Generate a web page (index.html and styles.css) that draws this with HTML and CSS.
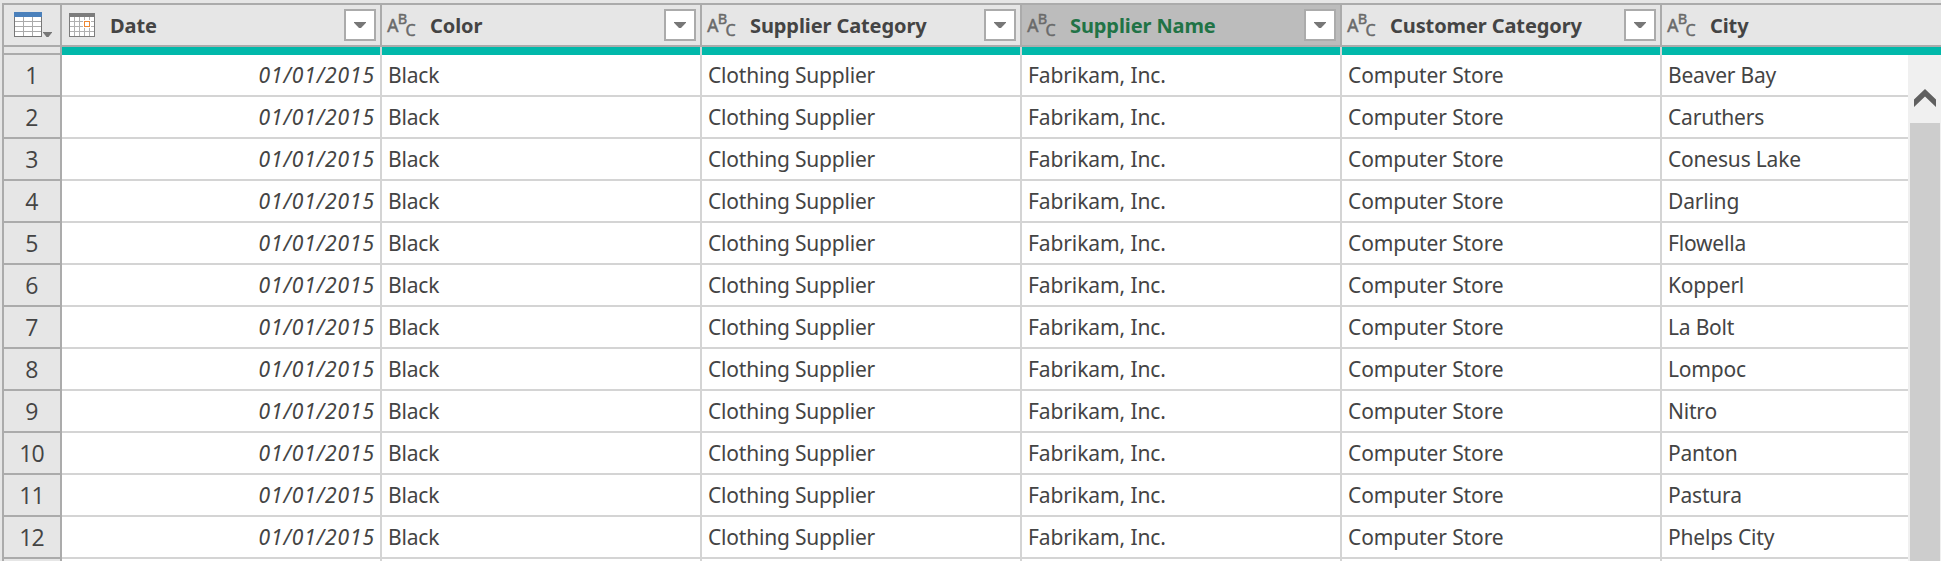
FILE: index.html
```html
<!DOCTYPE html>
<html lang="en">
<head>
<meta charset="utf-8">
<title>Query preview</title>
<link rel="stylesheet" href="styles.css">
</head>
<body>
<div class="grid">
  <div class="header">
    <div class="corner">
      <svg class="table-icon" width="28" height="25" shape-rendering="crispEdges">
        <path d="M0 5H28V25H0Z" fill="#777"/><path d="M1 5H27V24H1Z" fill="#fff"/>
        <path d="M0 0H28V5H0Z" fill="#4a80bb"/>
        <path d="M1 9.500H27M1 14.500H27M1 19.500H27M9.500 5V24M18.500 5V24" stroke="#aaa"/>
      </svg>
      <svg class="corner-arrow" width="9" height="5"><path d="M0 0H9V.5L5.500 5H3.500L0 .5Z" fill="#777"/></svg>
    </div>
    <div class="head">
      <svg class="calendar-icon" width="26" height="24" shape-rendering="crispEdges">
        <path d="M0 0H26V24H0Z" fill="#7c7c7c"/><path d="M1 4H25V23H1Z" fill="#fff"/>
        <path d="M5.500 4V23M10.500 4V23M15.500 4V23M20.500 4V23M1 8.500H25M1 13.500H25M1 18.500H25" stroke="#b0b0b0"/>
        <path d="M14 7H22V15H14Z" fill="#fff"/><path d="M15.500 8.500H20.500V13.500H15.500Z" fill="#fff" stroke="#ed8733"/>
      </svg>
      <span class="title">Date</span><span class="filter"><svg width="12" height="6"><path d="M0 0H12V.7L7 6H5L0 .7Z" fill="#777"/></svg></span></div>
    <div class="head"><svg class="abc" width="30" height="26"><text class="abc-a" x="0.3" y="19">A</text><text class="abc-b" x="10.800" y="11.200">B</text><text class="abc-c" x="18.600" y="22.600">C</text></svg><span class="title">Color</span><span class="filter"><svg width="12" height="6"><path d="M0 0H12V.7L7 6H5L0 .7Z" fill="#777"/></svg></span></div>
    <div class="head"><svg class="abc" width="30" height="26"><text class="abc-a" x="0.3" y="19">A</text><text class="abc-b" x="10.800" y="11.200">B</text><text class="abc-c" x="18.600" y="22.600">C</text></svg><span class="title">Supplier Category</span><span class="filter"><svg width="12" height="6"><path d="M0 0H12V.7L7 6H5L0 .7Z" fill="#777"/></svg></span></div>
    <div class="head selected"><svg class="abc" width="30" height="26"><text class="abc-a" x="0.3" y="19">A</text><text class="abc-b" x="10.800" y="11.200">B</text><text class="abc-c" x="18.600" y="22.600">C</text></svg><span class="title">Supplier Name</span><span class="filter"><svg width="12" height="6"><path d="M0 0H12V.7L7 6H5L0 .7Z" fill="#777"/></svg></span></div>
    <div class="head"><svg class="abc" width="30" height="26"><text class="abc-a" x="0.3" y="19">A</text><text class="abc-b" x="10.800" y="11.200">B</text><text class="abc-c" x="18.600" y="22.600">C</text></svg><span class="title">Customer Category</span><span class="filter"><svg width="12" height="6"><path d="M0 0H12V.7L7 6H5L0 .7Z" fill="#777"/></svg></span></div>
    <div class="head last"><svg class="abc" width="30" height="26"><text class="abc-a" x="0.3" y="19">A</text><text class="abc-b" x="10.800" y="11.200">B</text><text class="abc-c" x="18.600" y="22.600">C</text></svg><span class="title">City</span></div>
  </div>
  <div class="quality"><i class="quality-gutter"></i><i></i><i></i><i></i><i></i><i></i><i class="last"></i></div>
  <div class="body">
    <div class="rows" id="rows"></div>
    <div class="scrollbar">
      <svg class="up" width="22" height="18"><path d="M0 10.500L11 0L22 10.500V18L11 7.500L0 18Z" fill="#606060"/></svg>
      <div class="thumb"></div>
    </div>
  </div>
</div>
<script src="rows.js"></script>
</body>
</html>
```
FILE: styles.css
```css
* { box-sizing: border-box; }
body { margin: 0; background: #e6e6e6; color: #444; font: 21px/41px "Noto Sans", "Open Sans", sans-serif; overflow: hidden; }
.grid { width: 1941px; height: 561px; padding: 3px 0 0 2px; overflow: hidden; display: flex; flex-direction: column; }
.header { display: flex; flex: none; height: 44px; border: solid #ababab; border-width: 2px 0 2px 2px; }
.corner { display: flex; width: 58px; border-right: 2px solid #ababab; padding: 7px 0 0 10px; }
.table-icon { display: block; flex: none; }
.corner-arrow { margin: 20px 0 0 1px; flex: none; }
.head { display: flex; width: 320px; flex: none; border-right: 2px solid #ababab; padding: 0 4px 0 5px; }
.head.last { width: 279px; border: 0; }
.selected { background: #bcbcbc; }
.selected .title { color: #217346; }
.calendar-icon { margin: 8px 15px 0 2px; flex: none; }
.abc { margin: 8px 13px 0 0; flex: none; overflow: visible; font-family: "Noto Sans", sans-serif; fill: #6a6a6a; stroke: #6a6a6a; stroke-width: .5px; }
.abc-a { font-size: 17.5px; }
.abc-b { font-size: 14.5px; }
.abc-c { font-size: 16px; }
.title { font-size: 20px; line-height: 42px; font-weight: 700; white-space: nowrap; letter-spacing: -.1px; }
.filter { display: flex; align-items: center; justify-content: center; width: 32px; height: 32px; margin: 4px 0 0 auto; background: #fff; border: 2px solid #ababab; }
.quality { display: flex; flex: none; height: 8px; }
.quality i { width: 320px; flex: none; background: #01b8aa; border-right: 2px solid #d4d4d4; }
.quality .quality-gutter { width: 60px; background: #e6e6e6; border: solid #ababab; border-width: 0 2px 2px; }
.quality .last { width: 279px; border: 0; }
.body { display: flex; flex: 1; min-height: 0; overflow: hidden; }
.rows { width: 1906px; flex: none; }
.row { display: flex; height: 42px; }
.num { width: 60px; flex: none; background: #e6e6e6; border: solid #ababab; border-width: 0 2px 2px; text-align: center; font-family: "Open Sans", sans-serif; font-size: 23px; line-height: 41px; padding-right: 1px; letter-spacing: -.8px; }
.cell { width: 320px; flex: none; background: #fff; border: solid #d4d4d4; border-width: 0 2px 2px 0; padding: 0 6px; white-space: nowrap; letter-spacing: -.2px; }
.supplier, .customer { letter-spacing: -.1px; }
.date { text-align: right; font-style: italic; letter-spacing: .9px; padding-right: 5px; }
.city { width: 246px; border-right: 0; }
.scrollbar { flex: 1; background: #f0f0f0; padding: 34px 1px 0 2px; display: flex; flex-direction: column; }
.up { margin: 0 4px 16px; flex: none; }
.thumb { flex: 1; background: #cdcdcd; }
```
FILE: rows.js
```js
const cities = ["Beaver Bay", "Caruthers", "Conesus Lake", "Darling", "Flowella", "Kopperl", "La Bolt", "Lompoc", "Nitro", "Panton", "Pastura", "Phelps City", ""];
document.getElementById("rows").innerHTML = cities.map((city, i) => {
  const values = city ? ["01/01/2015", "Black", "Clothing Supplier", "Fabrikam, Inc.", "Computer Store", city] : ["", "", "", "", "", ""];
  const names = ["date", "color", "category", "supplier", "customer", "city"];
  return `<div class="row"><div class="num">${city ? i + 1 : ""}</div>` +
    values.map((v, c) => `<div class="cell ${names[c]}">${v}</div>`).join("") + "</div>";
}).join("");
```
